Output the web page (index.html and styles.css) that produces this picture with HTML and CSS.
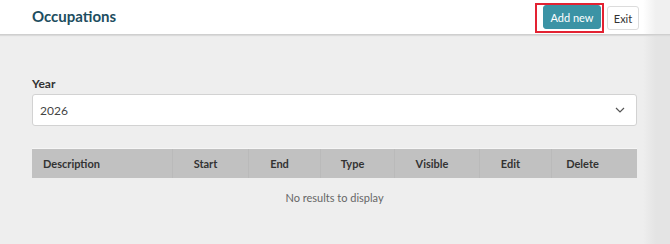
FILE: index.html
```html
<html>

<head>
	<link rel="stylesheet" href="styles.css">
</head>

<body>
	<div class="header">
		<h1>Occupations</h1>
		<div class="actions">
			<span class="highlight"><button class="btn primary">Add new</button></span>
			<button class="btn exit">Exit</button>
		</div>
	</div>

	<div class="content">
		<label class="field-label">Year</label>
		<div class="select">
			<span>2026</span>
			<svg width="10" height="6" viewBox="0 0 10 6"><path d="M1 1 L5 5 L9 1" fill="none" stroke="#555" stroke-width="1.2"/></svg>
		</div>

		<div class="grid-head">
			<div class="col left">Description</div>
			<div class="col">Start</div>
			<div class="col">End</div>
			<div class="col">Type</div>
			<div class="col">Visible</div>
			<div class="col">Edit</div>
			<div class="col wide">Delete</div>
		</div>
		<p class="empty">No results to display</p>
	</div>
</body>

</html>
```

FILE: styles.css
```css
:root {
	--teal: #3b93a5;
	--title: #1d4d60;
	--page: #eeeeee;
}

body {
	margin: 0;
	font-family: Lato, "Noto Sans", sans-serif;
	background: linear-gradient(to right, var(--page) 643px, #e4e4e4 656px);
	color: #333;
}

.header {
	height: 34px;
	display: flex;
	align-items: center;
	justify-content: space-between;
	padding: 0 31px 0 32px;
	background: linear-gradient(to right, #fff 643px, #f0f0f0 656px);
	border-bottom: 1px solid #cfcfcf;
	box-shadow: 0 1px 1px #dadada;
}

h1 {
	margin: 0 0 2px;
	font-size: 15px;
	font-weight: 700;
	color: var(--title);
}

.actions {
	display: flex;
	align-items: center;
	gap: 3px;
	margin-top: 2px;
}

.highlight {
	display: flex;
	padding: 0 1px 2px 6px;
	border: 2px solid #e32232;
}

.btn {
	font-family: inherit;
	font-size: 11px;
	height: 24px;
	width: 32px;
	padding: 0;
	background: #fff;
	color: #333;
	border: 1px solid #dcdcdc;
	border-radius: 3px;
}

.btn.primary {
	width: 58px;
	background: var(--teal);
	border-color: var(--teal);
	color: #fff;
}

.content {
	padding: 41px 33px 0 32px;
}

.field-label {
	display: block;
	font-size: 12px;
	font-weight: 700;
	color: #333;
	margin-bottom: 3px;
}

.select {
	height: 30px;
	display: flex;
	align-items: center;
	justify-content: space-between;
	padding: 0 11px 0 7px;
	background: #fff;
	border: 1px solid #d2d2d2;
	border-radius: 3px;
	font-size: 12px;
	color: #444;
}

.grid-head {
	margin-top: 22px;
	height: 29px;
	display: grid;
	grid-template-columns: 140px 76px 72px 74px 85px 72px 86px;
	background: #c1c1c1;
	border-top: 1px solid #f6f6f6;
	font-size: 11px;
	font-weight: 700;
	color: #333;
}

.col {
	display: flex;
	align-items: center;
	justify-content: center;
	padding-right: 10px;
	border-left: 1px solid #bababa;
}

.col.left {
	justify-content: flex-start;
	padding-left: 11px;
	border-left: none;
}

.col.wide {
	padding-right: 24px;
}

.empty {
	margin: 13px 0 0;
	text-align: center;
	font-size: 11px;
	color: #666;
}
```
